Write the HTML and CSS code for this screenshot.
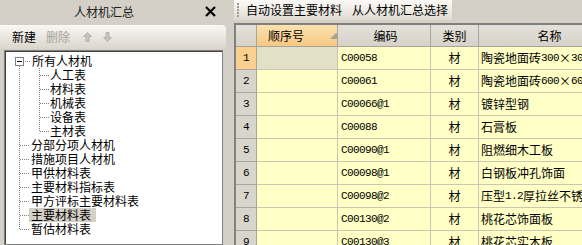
FILE: index.html
```html
<!DOCTYPE html>
<html lang="zh-CN">
<head>
<meta charset="utf-8">
<title>人材机汇总</title>
<link rel="stylesheet" href="styles.css">
</head>
<body>
<div class="app">
  <div class="left">
    <div class="titlebar">
      <span class="title">人材机汇总</span>
      <svg class="close" width="11" height="11" viewBox="0 0 11 11"><path d="M1 1 L10 10 M10 1 L1 10" stroke="#000" stroke-width="2.2" fill="none"/></svg>
    </div>
    <div class="ltool">
      <span class="tbtn">新建</span>
      <span class="tbtn dis">删除</span>
      <svg class="arrow up" width="9" height="10" viewBox="0 0 9 10"><path d="M4.5 0.5 L8.5 4.5 H6 V9.5 H3 V4.5 H0.5 Z" fill="#c8c4bc" stroke="#b4b0a8" stroke-width="1"/></svg>
      <svg class="arrow dn" width="9" height="10" viewBox="0 0 9 10"><path d="M4.5 9.5 L8.5 5.5 H6 V0.5 H3 V5.5 H0.5 Z" fill="#c8c4bc" stroke="#b4b0a8" stroke-width="1"/></svg>
    </div>
    <div class="tree">
      <div class="node root"><span class="exp"></span><span class="lbl">所有人材机</span></div>
      <div class="node child">人工表</div>
      <div class="node child">材料表</div>
      <div class="node child">机械表</div>
      <div class="node child">设备表</div>
      <div class="node child last">主材表</div>
      <div class="node top">分部分项人材机</div>
      <div class="node top">措施项目人材机</div>
      <div class="node top">甲供材料表</div>
      <div class="node top">主要材料指标表</div>
      <div class="node top">甲方评标主要材料表</div>
      <div class="node top"><span class="sel">主要材料表</span></div>
      <div class="node top last">暂估材料表</div>
    </div>
  </div>
  <div class="splitter"></div>
  <div class="right">
    <div class="rtool">
      <span class="grip"></span>
      <span class="rbtn">自动设置主要材料</span>
      <span class="rbtn second">从人材机汇总选择</span>
    </div>
    <div class="grid">
      <div class="row head">
        <div class="c rn"></div>
        <div class="c seq sorted"><span class="htext">顺序号</span><span class="sort"></span></div>
        <div class="c code">编码</div>
        <div class="c type">类别</div>
        <div class="c name">名称</div>
      </div>
      <div class="row cur">
        <div class="c rn">1</div>
        <div class="c seq"></div>
        <div class="c code">C00058</div>
        <div class="c type">材</div>
        <div class="c name">陶瓷地面砖<span class="num">300</span>×<span class="num">300</span></div>
      </div>
      <div class="row">
        <div class="c rn">2</div>
        <div class="c seq"></div>
        <div class="c code">C00061</div>
        <div class="c type">材</div>
        <div class="c name">陶瓷地面砖<span class="num">600</span>×<span class="num">600</span></div>
      </div>
      <div class="row">
        <div class="c rn">3</div>
        <div class="c seq"></div>
        <div class="c code">C00066@1</div>
        <div class="c type">材</div>
        <div class="c name">镀锌型钢</div>
      </div>
      <div class="row">
        <div class="c rn">4</div>
        <div class="c seq"></div>
        <div class="c code">C00088</div>
        <div class="c type">材</div>
        <div class="c name">石膏板</div>
      </div>
      <div class="row">
        <div class="c rn">5</div>
        <div class="c seq"></div>
        <div class="c code">C00090@1</div>
        <div class="c type">材</div>
        <div class="c name">阻燃细木工板</div>
      </div>
      <div class="row">
        <div class="c rn">6</div>
        <div class="c seq"></div>
        <div class="c code">C00098@1</div>
        <div class="c type">材</div>
        <div class="c name">白钢板冲孔饰面</div>
      </div>
      <div class="row">
        <div class="c rn">7</div>
        <div class="c seq"></div>
        <div class="c code">C00098@2</div>
        <div class="c type">材</div>
        <div class="c name">压型<span class="num">1.2</span>厚拉丝不锈钢</div>
      </div>
      <div class="row">
        <div class="c rn">8</div>
        <div class="c seq"></div>
        <div class="c code">C00130@2</div>
        <div class="c type">材</div>
        <div class="c name">桃花芯饰面板</div>
      </div>
      <div class="row">
        <div class="c rn">9</div>
        <div class="c seq"></div>
        <div class="c code">C00130@3</div>
        <div class="c type">材</div>
        <div class="c name">桃花芯实木板</div>
      </div>
    </div>
  </div>
</div>
</body>
</html>
```
FILE: styles.css
```css
* { box-sizing: border-box; margin: 0; padding: 0; }
html, body { width: 582px; height: 245px; overflow: hidden; }
body {
  background: #d4d0c8;
  font: 12px/14px "Noto Sans CJK SC", "Noto Sans", sans-serif;
  color: #000;
}
.app { display: flex; height: 245px; }

/* left panel */
.left { width: 226px; display: flex; flex-direction: column; flex: none; }
.titlebar { height: 23px; display: flex; align-items: center; padding-left: 74px; }
.title { color: #202020; }
.close { margin-left: auto; margin-right: 10px; }

.ltool {
  height: 24px; margin-top: 2px;
  background: linear-gradient(#f9f8f5, #e6e3dc 60%, #dad6ce);
  border-radius: 0 4px 0 0;
  display: flex; align-items: center; padding-left: 12px;
}
.tbtn { margin-right: 10px; }
.tbtn.dis { color: #a6a39c; }
.arrow.up { margin-left: 3px; }
.arrow.dn { margin-left: 11px; }

.tree {
  margin: 1px 3px 0 4px; flex: 1;
  background: #fff;
  border: 1px solid #808080;
  box-shadow: inset 1px 1px 0 #404040;
  padding-top: 3px;
}
.node {
  height: 14px; line-height: 14px; display: flex; align-items: center;
  white-space: nowrap;
  background-repeat: no-repeat;
}
.root {
  background-image:
    repeating-linear-gradient(to bottom, #808080 0 1px, transparent 1px 2px),
    repeating-linear-gradient(to right, #808080 0 1px, transparent 1px 2px);
  background-position: 14px 12px, 20px 7px;
  background-size: 1px 2px, 5px 1px;
}
.exp {
  width: 9px; height: 9px; margin-left: 10px; margin-right: 8px;
  border: 1px solid #808080; background: #fff linear-gradient(#000, #000) center / 5px 1px no-repeat;
}
.child {
  padding-left: 45px;
  background-image:
    repeating-linear-gradient(to bottom, #808080 0 1px, transparent 1px 2px),
    repeating-linear-gradient(to bottom, #808080 0 1px, transparent 1px 2px),
    repeating-linear-gradient(to right, #808080 0 1px, transparent 1px 2px);
  background-position: 14px 0, 34px 0, 35px 7px;
  background-size: 1px 100%, 1px 100%, 9px 1px;
}
.child.last { background-size: 1px 100%, 1px 8px, 9px 1px; }
.top {
  padding-left: 26px;
  background-image:
    repeating-linear-gradient(to bottom, #808080 0 1px, transparent 1px 2px),
    repeating-linear-gradient(to right, #808080 0 1px, transparent 1px 2px);
  background-position: 14px 0, 15px 7px;
  background-size: 1px 100%, 9px 1px;
}
.top.last { background-size: 1px 8px, 9px 1px; }
.sel { background: #d4d0c8; padding: 0 5px 0 2px; margin-left: -2px; }

.splitter { width: 8px; flex: none; }

/* right */
.right { flex: 1; display: flex; flex-direction: column; overflow: hidden; }
.rtool {
  height: 20px; width: 218px; flex: none;
  background: linear-gradient(#fbfaf7, #ebe8e2 60%, #dedad2);
  display: flex; align-items: center; padding-left: 3px;
}
.grip {
  width: 2px; height: 14px;
  background: repeating-linear-gradient(to bottom, #a09c94 0 2px, transparent 2px 3px);
  margin-right: 7px;
}
.rbtn.second { margin-left: 10px; }

.grid {
  margin-top: 3px;
  border-top: 2px solid;
  border-left: 2px solid;
  border-color: #808080 transparent transparent #808080;
  box-shadow: inset 1px 1px 0 #404040;
  flex: 1; overflow: hidden;
  padding: 0 0 0 0;
}
.row { display: flex; height: 23px; }
.row.head { height: 22px; }
.c {
  flex: none; height: 100%;
  border-right: 1px solid #c9c6b2;
  border-bottom: 1px solid #c9c6b2;
  background: #ffffc6;
  display: flex; align-items: center;
  white-space: nowrap; overflow: hidden;
}
.rn {
  width: 21px; justify-content: center;
  background: #d8d5cd;
  border-color: #a8a59e;
  font: 11px "Liberation Mono", monospace; letter-spacing: -0.6px;
}
.seq { width: 81px; }
.code {
  width: 93px; padding-left: 3px;
  font: 11px "Liberation Mono", monospace; letter-spacing: -0.6px;
}
.type { width: 48px; justify-content: center; }
.name { width: 140px; padding-left: 2px; }
.num { font: 11px "Liberation Mono", monospace; letter-spacing: -0.6px; }

.head .c {
  background: linear-gradient(#e4e1da, #d6d2ca);
  border-color: #a8a59e;
  font: 12px/14px "Noto Sans CJK SC", sans-serif; letter-spacing: 0;
  justify-content: center;
}
.head .c.sorted {
  background: linear-gradient(#fbe2b0, #f6c782);
  justify-content: flex-start; padding-left: 11px;
}
.sort {
  width: 0; height: 0; margin-left: 26px;
  border-left: 6px solid transparent; border-right: 6px solid transparent;
  border-bottom: 6px solid #a7a196;
}
.cur .rn { background: #fbd08e; }
.cur .seq { background: #e2e0c6; }
```
